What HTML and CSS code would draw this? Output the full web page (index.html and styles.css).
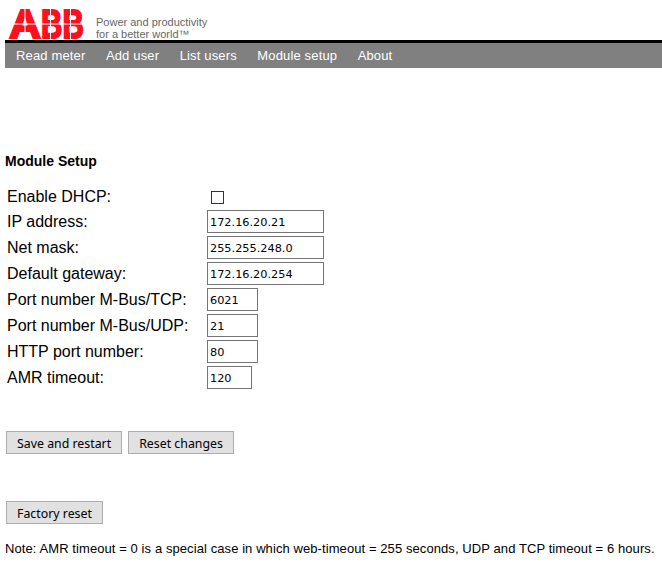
FILE: index.html
```html
<!DOCTYPE html>
<html lang="en">
<head>
  <meta charset="UTF-8">
  <title>Module Setup</title>
  <link rel="stylesheet" href="styles.css">
</head>
<body>
  <div class="header">
    <svg class="logo" width="76" height="30" viewBox="0 0 76 30">
      <text transform="translate(0 29) scale(1.08 1)" class="logo-text">A</text>
      <text transform="translate(32 29) scale(.72 1)" class="logo-text">B</text>
      <text transform="translate(53.5 29) scale(.72 1)" class="logo-text">B</text>
      <rect x="0" y="14.5" width="76" height="1" fill="#fff"/>
      <rect x="15.5" y="0" width="1" height="30" fill="#fff"/>
      <rect x="41" y="0" width="1" height="30" fill="#fff"/>
      <rect x="61" y="0" width="1" height="30" fill="#fff"/>
    </svg>
    <div class="tagline">Power and productivity<br>for a better world™</div>
  </div>
  <div class="nav">
    <a href="#">Read meter</a>
    <a href="#">Add user</a>
    <a href="#">List users</a>
    <a href="#">Module setup</a>
    <a href="#">About</a>
  </div>

  <h1 class="title">Module Setup</h1>

  <div class="form">
    <label>Enable DHCP:</label>
    <div class="check"><input type="checkbox"></div>
    <label>IP address:</label>
    <input class="field wide" type="text" value="172.16.20.21">
    <label>Net mask:</label>
    <input class="field wide" type="text" value="255.255.248.0">
    <label>Default gateway:</label>
    <input class="field wide" type="text" value="172.16.20.254">
    <label>Port number M-Bus/TCP:</label>
    <input class="field mid" type="text" value="6021">
    <label>Port number M-Bus/UDP:</label>
    <input class="field mid" type="text" value="21">
    <label>HTTP port number:</label>
    <input class="field mid" type="text" value="80">
    <label>AMR timeout:</label>
    <input class="field small" type="text" value="120">
  </div>

  <div class="buttons first">
    <button>Save and restart</button>
    <button>Reset changes</button>
  </div>
  <div class="buttons second">
    <button>Factory reset</button>
  </div>

  <p class="note">Note: AMR timeout = 0 is a special case in which web-timeout = 255 seconds, UDP and TCP timeout = 6 hours.</p>
</body>
</html>
```

FILE: styles.css
```css
body {
  margin: 0;
  background: #fff;
  color: #000;
  font-family: "Liberation Sans", Arial, sans-serif;
  font-size: 16px;
}
.header {
  display: flex;
  height: 40px;
  padding-left: 9px;
  box-sizing: border-box;
  padding-top: 9px;
}
.logo {
  display: block;
  flex: none;
  overflow: visible;
}
.logo-text {
  font-family: "Liberation Sans", sans-serif;
  font-weight: bold;
  font-size: 41px;
  fill: #ff0f1e;
  stroke: #ff0f1e;
  stroke-width: 2px;
}
.tagline {
  margin-left: 11px;
  margin-top: 7px;
  font-size: 11px;
  line-height: 12px;
  color: #666;
}
.nav {
  display: flex;
  margin-left: 5px;
  height: 25px;
  align-items: center;
  background: #808080;
  border-top: 3px solid #000;
  padding-left: 11px;
  gap: 20.5px;
}
.nav a {
  color: #fff;
  text-decoration: none;
  font-size: 13px;
  letter-spacing: 0.15px;
}
.title {
  margin: 85px 0 0 5px;
  font-size: 14px;
  line-height: 16px;
  font-weight: bold;
}
.form {
  display: grid;
  grid-template-columns: 200px auto;
  justify-content: start;
  margin: 18px 0 0 7px;
  row-gap: 3px;
  align-items: center;
}
.form label {
  line-height: 18px;
}
.check {
  height: 20px;
  display: flex;
  align-items: center;
}
.check input {
  appearance: none;
  width: 13px;
  height: 13px;
  margin: 0 0 0 4px;
  border: 1px solid #333;
  background: #fff;
}
.field {
  box-sizing: border-box;
  height: 23px;
  padding: 3px 2px 1px;
  border: 1px solid #767676;
  font-family: "DejaVu Sans", Tahoma, sans-serif;
  font-size: 11.3px;
  color: #000;
  background: #fff;
}
.wide { width: 117px; }
.mid { width: 51px; }
.small { width: 45px; }
.buttons {
  display: flex;
  gap: 6px;
  margin-left: 6px;
}
.first { margin-top: 42px; }
.second { margin-top: 47px; }
button {
  height: 23px;
  padding: 2px 10px 0;
  border: 1px solid #adadad;
  background: #e1e1e1;
  font-family: "Noto Sans", Tahoma, sans-serif;
  font-size: 12.35px;
  color: #000;
}
.note {
  margin: 18px 0 0 5px;
  font-size: 13px;
  letter-spacing: 0.085px;
  line-height: 14px;
  white-space: nowrap;
}
```
